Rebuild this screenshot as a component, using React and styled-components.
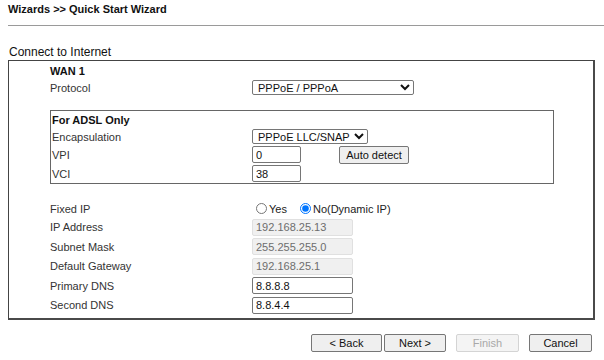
import React, { useState } from 'react';
import styled, { createGlobalStyle } from 'styled-components';

const GlobalStyle = createGlobalStyle`
  html, body {
    margin: 0;
    padding: 0;
    background: #fff;
  }
  body {
    font-family: "Liberation Sans", Arial, sans-serif;
    color: #222;
  }
`;

const Page = styled.div({
  width: 604,
  height: 360,
  overflow: 'hidden',
});

const Header = styled.div({
  height: 26,
  display: 'flex',
  alignItems: 'center',
  paddingBottom: 7,
  boxSizing: 'border-box',
  borderBottom: '1px solid #9a9a9a',
  marginLeft: 8,
  fontSize: 11,
  fontWeight: 'bold',
  color: '#111',
});

const SectionTitle = styled.div({
  height: 34,
  display: 'flex',
  alignItems: 'flex-end',
  paddingLeft: 9,
  paddingBottom: 1,
  boxSizing: 'border-box',
  fontSize: 12,
  color: '#111',
});

const Panel = styled.div({
  marginLeft: 8,
  width: 587,
  boxSizing: 'border-box',
  borderTop: '1px solid #444',
  borderLeft: '1px solid #444',
  borderRight: '2px solid #4a4a4a',
  borderBottom: '2px solid #4a4a4a',
  padding: '0 0 3px 41px',
});

const Row = styled.div(({ h }) => ({
  display: 'flex',
  alignItems: 'center',
  height: h || 19.5,
  fontSize: 11,
  color: '#333',
}));

const Label = styled.div(({ w }) => ({
  width: w || 202,
  flexShrink: 0,
}));

const Heading = styled.div({
  fontWeight: 'bold',
  fontSize: 11,
  color: '#111',
});

const SubBox = styled.div({
  width: 504,
  boxSizing: 'border-box',
  border: '1px solid #666',
  marginTop: 15,
  marginBottom: 16,
  paddingLeft: 1,
});

const Select = styled.select(({ w }) => ({
  width: w,
  height: 15,
  boxSizing: 'border-box',
  border: '1px solid #767676',
  borderRadius: 2,
  background: '#fff',
  fontFamily: '"Liberation Sans", Arial, sans-serif',
  fontSize: 11,
  color: '#111',
  padding: '0 0 0 1px',
  margin: 0,
}));

const TextBox = styled.input(({ w }) => ({
  width: w || 101,
  height: 17,
  boxSizing: 'border-box',
  border: '1px solid #767676',
  borderRadius: 2,
  padding: '0 3px',
  margin: 0,
  fontFamily: '"Liberation Sans", Arial, sans-serif',
  fontSize: 11,
  color: '#111',
  background: '#fff',
  '&:disabled': {
    background: '#f0f0f0',
    borderColor: '#e0e0e0',
    color: '#6d6d6d',
  },
}));

const Button = styled.button(({ w, gapLeft }) => ({
  width: w,
  height: 18,
  boxSizing: 'border-box',
  border: '1px solid #767676',
  borderRadius: 2,
  background: '#efefef',
  fontFamily: '"Liberation Sans", Arial, sans-serif',
  fontSize: 11,
  color: '#111',
  padding: 0,
  margin: 0,
  marginLeft: gapLeft || 0,
  '&:disabled': {
    borderColor: '#d4d4d4',
    background: '#f4f4f4',
    color: '#a8a8a8',
  },
}));

const RadioGroup = styled.div({
  display: 'flex',
  alignItems: 'center',
  marginLeft: 4,
});

const RadioLabel = styled.label({
  display: 'flex',
  alignItems: 'center',
  marginRight: 13,
  color: '#222',
});

const Radio = styled.input({
  width: 11,
  height: 11,
  margin: '0 2px 0 0',
  accentColor: '#0075ff',
});

const ButtonBar = styled.div({
  display: 'flex',
  justifyContent: 'flex-end',
  gap: 10,
  width: 592,
  marginTop: 14,
});

const ButtonPair = styled.div({
  display: 'flex',
  gap: 2,
});

export default function App() {
  const [fixed, setFixed] = useState('no');

  return (
    <Page>
      <GlobalStyle />
      <Header>Wizards &gt;&gt; Quick Start Wizard</Header>
      <SectionTitle>Connect to Internet</SectionTitle>
      <Panel>
        <Row h={19}>
          <Heading>WAN 1</Heading>
        </Row>
        <Row h={15}>
          <Label>Protocol</Label>
          <Select w={162} defaultValue="pppoe">
            <option value="pppoe">PPPoE / PPPoA</option>
            <option value="mpoa">MPoA / Static or Dynamic IP</option>
          </Select>
        </Row>

        <SubBox>
          <Row h={17}>
            <Heading>For ADSL Only</Heading>
          </Row>
          <Row h={17}>
            <Label w={200}>Encapsulation</Label>
            <Select w={116} defaultValue="llc">
              <option value="llc">PPPoE LLC/SNAP</option>
              <option value="vc">PPPoE VC MUX</option>
            </Select>
          </Row>
          <Row h={19}>
            <Label w={200}>VPI</Label>
            <TextBox w={49} defaultValue="0" />
            <Button w={70} gapLeft={38}>Auto detect</Button>
          </Row>
          <Row h={19}>
            <Label w={200}>VCI</Label>
            <TextBox w={49} defaultValue="38" />
          </Row>
        </SubBox>

        <Row h={17.5}>
          <Label>Fixed IP</Label>
          <RadioGroup>
            <RadioLabel>
              <Radio type="radio" name="fixed" checked={fixed === 'yes'} onChange={() => setFixed('yes')} />
              Yes
            </RadioLabel>
            <RadioLabel>
              <Radio type="radio" name="fixed" checked={fixed === 'no'} onChange={() => setFixed('no')} />
              No(Dynamic IP)
            </RadioLabel>
          </RadioGroup>
        </Row>
        <Row>
          <Label>IP Address</Label>
          <TextBox defaultValue="192.168.25.13" disabled={fixed === 'no'} />
        </Row>
        <Row>
          <Label>Subnet Mask</Label>
          <TextBox defaultValue="255.255.255.0" disabled={fixed === 'no'} />
        </Row>
        <Row>
          <Label>Default Gateway</Label>
          <TextBox defaultValue="192.168.25.1" disabled={fixed === 'no'} />
        </Row>
        <Row>
          <Label>Primary DNS</Label>
          <TextBox defaultValue="8.8.8.8" />
        </Row>
        <Row>
          <Label>Second DNS</Label>
          <TextBox defaultValue="8.8.4.4" />
        </Row>
      </Panel>

      <ButtonBar>
        <ButtonPair>
          <Button w={71}>&lt; Back</Button>
          <Button w={62}>Next &gt;</Button>
        </ButtonPair>
        <Button w={63} disabled>Finish</Button>
        <Button w={63}>Cancel</Button>
      </ButtonBar>
    </Page>
  );
}
